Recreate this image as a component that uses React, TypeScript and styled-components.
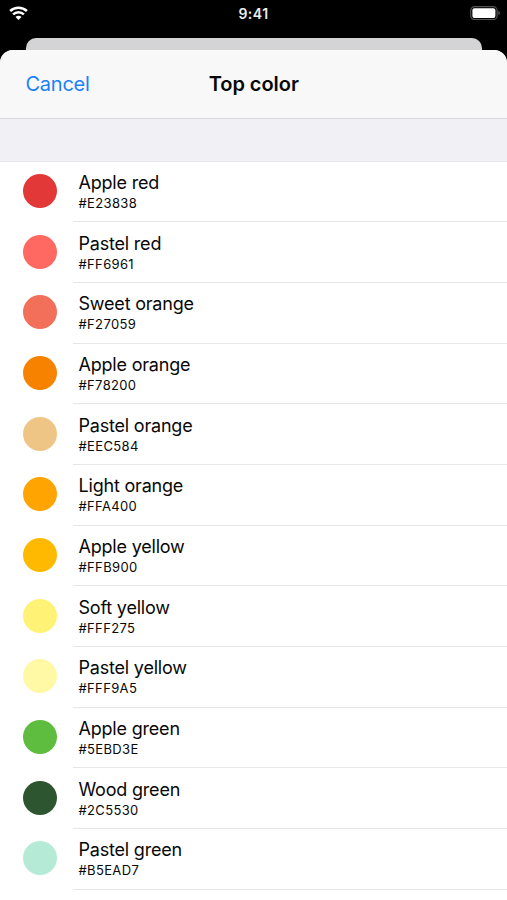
import React from 'react';
import styled, { createGlobalStyle } from 'styled-components';

const Global = createGlobalStyle`
  * { box-sizing: border-box; }
  body { margin: 0; background: #000; font-family: Inter, "Liberation Sans", sans-serif; color: #080808; }
`;
const Screen = styled.div`
  display: flex;
  flex-direction: column;
  height: 900px;
  overflow: hidden;
  background: #000;
`;
const StatusBar = styled.header`
  display: grid;
  grid-template-columns: 1fr auto 1fr;
  align-items: center;
  flex: 0 0 38px;
  padding: 0 6px 12px 9px;
  color: #ececec;
  > svg:last-child { justify-self: end; }
`;
const Time = styled.span`
  margin: 1px 3px 0 0;
  font-size: 14px;
  font-weight: 600;
  line-height: 16px;
  letter-spacing: 0.5px;
`;
const BackCard = styled.div`
  flex: 0 0 12px;
  margin: 0 25px 0 26px;
  border-radius: 10px 10px 0 0;
  background: #d4d4d6;
`;
const Sheet = styled.main`
  flex: 1;
  min-height: 0;
  background: #fff;
  border-radius: 13px 13px 0 0;
  overflow: hidden;
`;
const NavBar = styled.nav`
  display: grid;
  grid-template-columns: 1fr auto 1fr;
  align-items: center;
  height: 69px;
  padding: 0 25px 0 25.5px;
  background: #f8f8f8;
  border-bottom: 1px solid #d9d9db;
`;
const Cancel = styled.button`
  justify-self: start;
  padding: 0;
  border: 0;
  background: none;
  color: #1a82f7;
  font: 400 20px/24px Inter, sans-serif;
  letter-spacing: -0.25px;
`;
const Title = styled.h1`
  margin: 0;
  font-size: 20px;
  line-height: 24px;
  font-weight: 600;
  letter-spacing: -0.05px;
`;
const SectionGap = styled.div`
  height: 42.5px;
  background: #f0f0f5;
  border-bottom: 1px solid #e7e7eb;
`;
const List = styled.ul`
  margin: 0;
  padding: 0;
  list-style: none;
`;
const Row = styled.li`
  display: flex;
  height: 60.68px;
  padding-left: 23px;
`;
const Swatch = styled.span<{ $color: string }>`
  flex: none;
  width: 34px;
  height: 34px;
  margin: 12.6px 16px 0 0;
  border-radius: 50%;
  background: ${p => p.$color};
`;
const Labels = styled.div`
  flex: 1;
  padding: 10.45px 0 0 5.5px;
  border-bottom: 1px solid #e6e6e8;
`;
const Name = styled.div`
  font-size: 18px;
  line-height: 22px;
  letter-spacing: -0.2px;
`;
const Hex = styled.div`
  font-size: 13px;
  line-height: 19px;
  letter-spacing: 0.35px;
`;

const colors = [
  ['Apple red', '#E23838'],
  ['Pastel red', '#FF6961'],
  ['Sweet orange', '#F27059'],
  ['Apple orange', '#F78200'],
  ['Pastel orange', '#EEC584'],
  ['Light orange', '#FFA400'],
  ['Apple yellow', '#FFB900'],
  ['Soft yellow', '#FFF275'],
  ['Pastel yellow', '#FFF9A5'],
  ['Apple green', '#5EBD3E'],
  ['Wood green', '#2C5530'],
  ['Pastel green', '#B5EAD7'],
];

export default function App() {
  return (
    <Screen>
      <Global />
      <StatusBar>
        <svg width="19" height="14" viewBox="0 0 19 14" fill="none" stroke="#fff" strokeWidth="2.5">
          <path d="M1.1 5a12.2 12.2 0 0 1 16.8 0M4.1 8.3a7.8 7.8 0 0 1 10.8 0" />
          <path d="M9.5 14 6.5 11a4.2 4.2 0 0 1 6 0z" fill="#fff" stroke="none" />
        </svg>
        <Time>9:41</Time>
        <svg width="31" height="14" viewBox="0 0 31 14">
          <rect x=".7" y=".7" width="26.4" height="12.8" rx="3.8" fill="none" stroke="#555" strokeWidth="1.2" />
          <rect x="2.4" y="2.2" width="23" height="9.8" rx="2" fill="#fff" />
          <path d="M28.4 4.8q1.6.7 1.6 2.2t-1.6 2.2z" fill="#555" />
        </svg>
      </StatusBar>
      <BackCard />
      <Sheet>
        <NavBar>
          <Cancel>Cancel</Cancel>
          <Title>Top color</Title>
        </NavBar>
        <SectionGap />
        <List>
          {colors.map(([name, hex]) => (
            <Row key={hex}>
              <Swatch $color={hex} />
              <Labels>
                <Name>{name}</Name>
                <Hex>{hex}</Hex>
              </Labels>
            </Row>
          ))}
        </List>
      </Sheet>
    </Screen>
  );
}
